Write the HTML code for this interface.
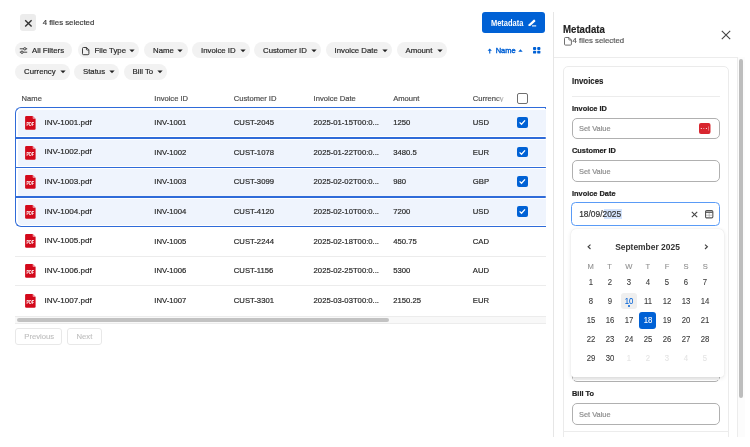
<!DOCTYPE html>
<html><head><meta charset="utf-8"><style>
html,body{margin:0;padding:0;width:750px;height:447px;overflow:hidden;background:#fff;font-family:"Liberation Sans", sans-serif;}
.t{position:absolute;white-space:nowrap;line-height:1;font-family:"Liberation Sans", sans-serif;-webkit-text-stroke:0.2px currentColor;}
.r{position:absolute;}
svg.r{overflow:visible}
</style></head><body>
<div id="w" style="position:absolute;left:0;top:0;width:750px;height:447px;will-change:transform">
<div class="r" style="left:19.5px;top:14.1px;width:16.8px;height:17px;background:#ececec;border-radius:3px"></div>
<svg class="r" style="left:19.5px;top:14.6px" width="17" height="17" viewBox="0 0 17 17"><path d="M5.2 5.2 L11.6 11.6 M11.6 5.2 L5.2 11.6" stroke="#333" stroke-width="1.4" fill="none"/></svg>
<div class="t" style="left:42.7px;top:19.30px;font-size:7.8px;color:#3d3d3d;font-weight:normal;">4 files selected</div>
<div class="r" style="left:482px;top:12.4px;width:63.4px;height:21px;background:#0061d5;border-radius:3px"></div>
<div class="t" style="left:490.8px;top:18.67px;font-size:8.3px;color:#fff;font-weight:bold;-webkit-text-stroke:0;transform:scaleX(0.9);transform-origin:0 0">Metadata</div>
<svg class="r" style="left:527px;top:19px" width="10" height="8" viewBox="0 0 10 8"><path d="M1.4 6.9 L1.6 5.6 L6.6 0.8 Q7.1 0.4 7.6 0.8 L8.2 1.4 Q8.6 1.9 8.2 2.4 L3.2 7.1 Z" fill="#fff"/><path d="M5 6.9 H9.2" stroke="#fff" stroke-width="1.1"/></svg>
<div class="r" style="left:15.4px;top:42.3px;width:57px;height:16.2px;background:#f2f2f2;border-radius:8px"></div>
<div class="t" style="left:32px;top:46.90px;font-size:7.8px;color:#2a2a2a;font-weight:normal;">All Filters</div>
<svg class="r" style="left:19px;top:45.8px" width="9" height="9" viewBox="0 0 9 9"><path d="M0.8 2.8 H8.2 M0.8 6.2 H8.2" stroke="#333" stroke-width="0.9"/><circle cx="5.8" cy="2.8" r="1.2" fill="#f2f2f2" stroke="#333" stroke-width="0.9"/><circle cx="3" cy="6.2" r="1.2" fill="#f2f2f2" stroke="#333" stroke-width="0.9"/></svg>
<div class="r" style="left:77.6px;top:42.3px;width:61.8px;height:16.2px;background:#f2f2f2;border-radius:8px"></div>
<div class="t" style="left:94.5px;top:46.90px;font-size:7.8px;color:#2a2a2a;font-weight:normal;">File Type</div>
<svg class="r" style="left:128.99999999999997px;top:48.8px" width="6" height="4" viewBox="0 0 6 4"><path d="M0.6 0.5 H5.4 Q5.6 0.5 5.4 0.8 L3.2 3.1 Q3 3.3 2.8 3.1 L0.6 0.8 Q0.4 0.5 0.6 0.5 Z" fill="#222"/></svg>
<svg class="r" style="left:82px;top:46.699999999999996px" width="7.4" height="8.2" viewBox="0 0 7.4 8.2"><path d="M1.6 0.5 H4.6 L6.9 2.8 V6.7 Q6.9 7.7 5.9 7.7 H1.6 Q0.5 7.7 0.5 6.7 V1.5 Q0.5 0.5 1.6 0.5 Z M4.4 0.6 V2.2 Q4.4 3 5.2 3 H6.8" stroke="#333" stroke-width="0.95" fill="none" stroke-linejoin="round"/></svg>
<div class="r" style="left:144.4px;top:42.3px;width:43.2px;height:16.2px;background:#f2f2f2;border-radius:8px"></div>
<div class="t" style="left:153px;top:46.90px;font-size:7.8px;color:#2a2a2a;font-weight:normal;">Name</div>
<svg class="r" style="left:177.20000000000002px;top:48.8px" width="6" height="4" viewBox="0 0 6 4"><path d="M0.6 0.5 H5.4 Q5.6 0.5 5.4 0.8 L3.2 3.1 Q3 3.3 2.8 3.1 L0.6 0.8 Q0.4 0.5 0.6 0.5 Z" fill="#222"/></svg>
<div class="r" style="left:192px;top:42.3px;width:58px;height:16.2px;background:#f2f2f2;border-radius:8px"></div>
<div class="t" style="left:201px;top:46.90px;font-size:7.8px;color:#2a2a2a;font-weight:normal;">Invoice ID</div>
<svg class="r" style="left:239.6px;top:48.8px" width="6" height="4" viewBox="0 0 6 4"><path d="M0.6 0.5 H5.4 Q5.6 0.5 5.4 0.8 L3.2 3.1 Q3 3.3 2.8 3.1 L0.6 0.8 Q0.4 0.5 0.6 0.5 Z" fill="#222"/></svg>
<div class="r" style="left:254.4px;top:42.3px;width:66.6px;height:16.2px;background:#f2f2f2;border-radius:8px"></div>
<div class="t" style="left:263px;top:46.90px;font-size:7.8px;color:#2a2a2a;font-weight:normal;">Customer ID</div>
<svg class="r" style="left:310.6px;top:48.8px" width="6" height="4" viewBox="0 0 6 4"><path d="M0.6 0.5 H5.4 Q5.6 0.5 5.4 0.8 L3.2 3.1 Q3 3.3 2.8 3.1 L0.6 0.8 Q0.4 0.5 0.6 0.5 Z" fill="#222"/></svg>
<div class="r" style="left:326px;top:42.3px;width:66.4px;height:16.2px;background:#f2f2f2;border-radius:8px"></div>
<div class="t" style="left:334.5px;top:46.90px;font-size:7.8px;color:#2a2a2a;font-weight:normal;">Invoice Date</div>
<svg class="r" style="left:382.0px;top:48.8px" width="6" height="4" viewBox="0 0 6 4"><path d="M0.6 0.5 H5.4 Q5.6 0.5 5.4 0.8 L3.2 3.1 Q3 3.3 2.8 3.1 L0.6 0.8 Q0.4 0.5 0.6 0.5 Z" fill="#222"/></svg>
<div class="r" style="left:397px;top:42.3px;width:50px;height:16.2px;background:#f2f2f2;border-radius:8px"></div>
<div class="t" style="left:405.5px;top:46.90px;font-size:7.8px;color:#2a2a2a;font-weight:normal;">Amount</div>
<svg class="r" style="left:436.6px;top:48.8px" width="6" height="4" viewBox="0 0 6 4"><path d="M0.6 0.5 H5.4 Q5.6 0.5 5.4 0.8 L3.2 3.1 Q3 3.3 2.8 3.1 L0.6 0.8 Q0.4 0.5 0.6 0.5 Z" fill="#222"/></svg>
<div class="r" style="left:15.4px;top:63.7px;width:54.6px;height:16.2px;background:#f2f2f2;border-radius:8px"></div>
<div class="t" style="left:24px;top:68.30px;font-size:7.8px;color:#2a2a2a;font-weight:normal;">Currency</div>
<svg class="r" style="left:59.6px;top:70.2px" width="6" height="4" viewBox="0 0 6 4"><path d="M0.6 0.5 H5.4 Q5.6 0.5 5.4 0.8 L3.2 3.1 Q3 3.3 2.8 3.1 L0.6 0.8 Q0.4 0.5 0.6 0.5 Z" fill="#222"/></svg>
<div class="r" style="left:74.4px;top:63.7px;width:44.6px;height:16.2px;background:#f2f2f2;border-radius:8px"></div>
<div class="t" style="left:83px;top:68.30px;font-size:7.8px;color:#2a2a2a;font-weight:normal;">Status</div>
<svg class="r" style="left:108.6px;top:70.2px" width="6" height="4" viewBox="0 0 6 4"><path d="M0.6 0.5 H5.4 Q5.6 0.5 5.4 0.8 L3.2 3.1 Q3 3.3 2.8 3.1 L0.6 0.8 Q0.4 0.5 0.6 0.5 Z" fill="#222"/></svg>
<div class="r" style="left:124px;top:63.7px;width:43px;height:16.2px;background:#f2f2f2;border-radius:8px"></div>
<div class="t" style="left:132.5px;top:68.30px;font-size:7.8px;color:#2a2a2a;font-weight:normal;">Bill To</div>
<svg class="r" style="left:156.6px;top:70.2px" width="6" height="4" viewBox="0 0 6 4"><path d="M0.6 0.5 H5.4 Q5.6 0.5 5.4 0.8 L3.2 3.1 Q3 3.3 2.8 3.1 L0.6 0.8 Q0.4 0.5 0.6 0.5 Z" fill="#222"/></svg>
<svg class="r" style="left:486.9px;top:47.6px" width="5.5" height="6" viewBox="0 0 5.5 6"><path d="M2.75 0.4 L4.9 2.7 H0.6 Z" fill="#0061d5"/><path d="M2.75 2 V5.4" stroke="#0061d5" stroke-width="1.1"/></svg>
<div class="t" style="left:495.7px;top:46.75px;font-size:7.5px;color:#0061d5;font-weight:normal;-webkit-text-stroke:0.4px #0061d5">Name</div>
<svg class="r" style="left:518.3px;top:48.8px" width="5" height="3" viewBox="0 0 5 3"><path d="M0.3 2.7 H4.7 L2.5 0.3 Z" fill="#0061d5"/></svg>
<svg class="r" style="left:533.2px;top:47.1px" width="7.4" height="6.6" viewBox="0 0 7.4 6.6"><rect x="0" y="0" width="3.2" height="2.9" rx="0.9" fill="#0061d5"/><rect x="4.2" y="0" width="3.2" height="2.9" rx="0.9" fill="#0061d5"/><rect x="0" y="3.7" width="3.2" height="2.9" rx="0.9" fill="#0061d5"/><rect x="4.2" y="3.7" width="3.2" height="2.9" rx="0.9" fill="#0061d5"/></svg>
<div class="t" style="left:21.6px;top:94.87px;font-size:7.6px;color:#4e4e4e;font-weight:normal;">Name</div>
<div class="t" style="left:154.3px;top:94.87px;font-size:7.6px;color:#4e4e4e;font-weight:normal;">Invoice ID</div>
<div class="t" style="left:233.8px;top:94.87px;font-size:7.6px;color:#4e4e4e;font-weight:normal;">Customer ID</div>
<div class="t" style="left:313.6px;top:94.87px;font-size:7.6px;color:#4e4e4e;font-weight:normal;">Invoice Date</div>
<div class="t" style="left:393.2px;top:94.87px;font-size:7.6px;color:#4e4e4e;font-weight:normal;">Amount</div>
<div class="t" style="left:472.8px;top:94.87px;font-size:7.6px;color:#4e4e4e;font-weight:normal;width:32px;overflow:hidden;-webkit-mask-image:linear-gradient(to right,#000 72%,rgba(0,0,0,0.15) 100%)">Currency</div>
<div class="r" style="left:517px;top:93px;width:10.5px;height:10.5px;border:1.2px solid #6f6f6f;border-radius:2px;box-sizing:border-box;background:#fff"></div>
<div class="r" style="left:15.0px;top:107.4px;width:531.0px;height:120.08000000000001px;background:#fff;border:1.6px solid #2f6bd9;border-right:none;border-radius:6px 0 0 6px;box-sizing:border-box"></div>
<div class="r" style="left:17.6px;top:109.9px;width:528.4px;height:26.519999999999982px;background:#eff4fd;border-radius:4px 0 0 0"></div>
<div class="r" style="left:17.6px;top:139.52px;width:528.4px;height:26.519999999999982px;background:#eff4fd;border-radius:0"></div>
<div class="r" style="left:17.6px;top:169.14000000000001px;width:528.4px;height:26.519999999999982px;background:#eff4fd;border-radius:0"></div>
<div class="r" style="left:17.6px;top:198.76000000000002px;width:528.4px;height:26.519999999999982px;background:#eff4fd;border-radius:0 0 0 4px"></div>
<div class="r" style="left:15.0px;top:137.01999999999998px;width:531.0px;height:1.6px;background:#2f6bd9;border-radius:0 1px 1px 0"></div>
<div class="r" style="left:15.0px;top:166.64px;width:531.0px;height:1.6px;background:#2f6bd9;border-radius:0 1px 1px 0"></div>
<div class="r" style="left:15.0px;top:196.26px;width:531.0px;height:1.6px;background:#2f6bd9;border-radius:0 1px 1px 0"></div>
<div class="r" style="left:545px;top:107.4px;width:1.2px;height:1.6px;background:#2f6bd9;border-radius:0 1px 1px 0"></div>
<div class="r" style="left:15.0px;top:255.8px;width:531.0px;height:1px;background:#ececec"></div>
<div class="r" style="left:15.0px;top:285.42px;width:531.0px;height:1px;background:#ececec"></div>
<svg class="r" style="left:24.7px;top:115.9px" width="11" height="14" viewBox="0 0 11 14"><path d="M1.3 0.1 H7.6 L10.6 3.1 V12.5 Q10.6 13.7 9.4 13.7 H1.3 Q0.1 13.7 0.1 12.5 V1.3 Q0.1 0.1 1.3 0.1 Z" fill="#d3091b"/><path d="M7.6 0.1 V2.1 Q7.6 3.1 8.6 3.1 H10.6 Z" fill="#ee8f98"/><text x="1.4" y="10.1" font-family="Liberation Sans" font-weight="bold" font-size="5.6" textLength="7.6" lengthAdjust="spacingAndGlyphs" fill="#fff">PDF</text></svg>
<div class="t" style="left:44.4px;top:118.84px;font-size:8.1px;color:#2a2a2a;font-weight:normal;">INV-1001.pdf</div>
<div class="t" style="left:154.3px;top:119.18px;font-size:7.7px;color:#2a2a2a;font-weight:normal;">INV-1001</div>
<div class="t" style="left:233.8px;top:119.18px;font-size:7.7px;color:#2a2a2a;font-weight:normal;">CUST-2045</div>
<div class="t" style="left:313.6px;top:119.18px;font-size:7.7px;color:#2a2a2a;font-weight:normal;">2025-01-15T00:0...</div>
<div class="t" style="left:393.2px;top:119.18px;font-size:7.7px;color:#2a2a2a;font-weight:normal;">1250</div>
<div class="t" style="left:472.8px;top:119.18px;font-size:7.7px;color:#2a2a2a;font-weight:normal;">USD</div>
<div class="r" style="left:517px;top:117.2px;width:10.5px;height:10.5px;background:#0061d5;border-radius:2px"></div>
<svg class="r" style="left:517px;top:117.2px" width="10.5" height="10.5" viewBox="0 0 10.5 10.5"><path d="M2.6 5.4 L4.5 7.3 L8 3.4" stroke="#fff" stroke-width="1.3" fill="none"/></svg>
<svg class="r" style="left:24.7px;top:145.51999999999998px" width="11" height="14" viewBox="0 0 11 14"><path d="M1.3 0.1 H7.6 L10.6 3.1 V12.5 Q10.6 13.7 9.4 13.7 H1.3 Q0.1 13.7 0.1 12.5 V1.3 Q0.1 0.1 1.3 0.1 Z" fill="#d3091b"/><path d="M7.6 0.1 V2.1 Q7.6 3.1 8.6 3.1 H10.6 Z" fill="#ee8f98"/><text x="1.4" y="10.1" font-family="Liberation Sans" font-weight="bold" font-size="5.6" textLength="7.6" lengthAdjust="spacingAndGlyphs" fill="#fff">PDF</text></svg>
<div class="t" style="left:44.4px;top:148.46px;font-size:8.1px;color:#2a2a2a;font-weight:normal;">INV-1002.pdf</div>
<div class="t" style="left:154.3px;top:148.80px;font-size:7.7px;color:#2a2a2a;font-weight:normal;">INV-1002</div>
<div class="t" style="left:233.8px;top:148.80px;font-size:7.7px;color:#2a2a2a;font-weight:normal;">CUST-1078</div>
<div class="t" style="left:313.6px;top:148.80px;font-size:7.7px;color:#2a2a2a;font-weight:normal;">2025-01-22T00:0...</div>
<div class="t" style="left:393.2px;top:148.80px;font-size:7.7px;color:#2a2a2a;font-weight:normal;">3480.5</div>
<div class="t" style="left:472.8px;top:148.80px;font-size:7.7px;color:#2a2a2a;font-weight:normal;">EUR</div>
<div class="r" style="left:517px;top:146.82px;width:10.5px;height:10.5px;background:#0061d5;border-radius:2px"></div>
<svg class="r" style="left:517px;top:146.82px" width="10.5" height="10.5" viewBox="0 0 10.5 10.5"><path d="M2.6 5.4 L4.5 7.3 L8 3.4" stroke="#fff" stroke-width="1.3" fill="none"/></svg>
<svg class="r" style="left:24.7px;top:175.14px" width="11" height="14" viewBox="0 0 11 14"><path d="M1.3 0.1 H7.6 L10.6 3.1 V12.5 Q10.6 13.7 9.4 13.7 H1.3 Q0.1 13.7 0.1 12.5 V1.3 Q0.1 0.1 1.3 0.1 Z" fill="#d3091b"/><path d="M7.6 0.1 V2.1 Q7.6 3.1 8.6 3.1 H10.6 Z" fill="#ee8f98"/><text x="1.4" y="10.1" font-family="Liberation Sans" font-weight="bold" font-size="5.6" textLength="7.6" lengthAdjust="spacingAndGlyphs" fill="#fff">PDF</text></svg>
<div class="t" style="left:44.4px;top:178.08px;font-size:8.1px;color:#2a2a2a;font-weight:normal;">INV-1003.pdf</div>
<div class="t" style="left:154.3px;top:178.42px;font-size:7.7px;color:#2a2a2a;font-weight:normal;">INV-1003</div>
<div class="t" style="left:233.8px;top:178.42px;font-size:7.7px;color:#2a2a2a;font-weight:normal;">CUST-3099</div>
<div class="t" style="left:313.6px;top:178.42px;font-size:7.7px;color:#2a2a2a;font-weight:normal;">2025-02-02T00:0...</div>
<div class="t" style="left:393.2px;top:178.42px;font-size:7.7px;color:#2a2a2a;font-weight:normal;">980</div>
<div class="t" style="left:472.8px;top:178.42px;font-size:7.7px;color:#2a2a2a;font-weight:normal;">GBP</div>
<div class="r" style="left:517px;top:176.44px;width:10.5px;height:10.5px;background:#0061d5;border-radius:2px"></div>
<svg class="r" style="left:517px;top:176.44px" width="10.5" height="10.5" viewBox="0 0 10.5 10.5"><path d="M2.6 5.4 L4.5 7.3 L8 3.4" stroke="#fff" stroke-width="1.3" fill="none"/></svg>
<svg class="r" style="left:24.7px;top:204.76px" width="11" height="14" viewBox="0 0 11 14"><path d="M1.3 0.1 H7.6 L10.6 3.1 V12.5 Q10.6 13.7 9.4 13.7 H1.3 Q0.1 13.7 0.1 12.5 V1.3 Q0.1 0.1 1.3 0.1 Z" fill="#d3091b"/><path d="M7.6 0.1 V2.1 Q7.6 3.1 8.6 3.1 H10.6 Z" fill="#ee8f98"/><text x="1.4" y="10.1" font-family="Liberation Sans" font-weight="bold" font-size="5.6" textLength="7.6" lengthAdjust="spacingAndGlyphs" fill="#fff">PDF</text></svg>
<div class="t" style="left:44.4px;top:207.70px;font-size:8.1px;color:#2a2a2a;font-weight:normal;">INV-1004.pdf</div>
<div class="t" style="left:154.3px;top:208.04px;font-size:7.7px;color:#2a2a2a;font-weight:normal;">INV-1004</div>
<div class="t" style="left:233.8px;top:208.04px;font-size:7.7px;color:#2a2a2a;font-weight:normal;">CUST-4120</div>
<div class="t" style="left:313.6px;top:208.04px;font-size:7.7px;color:#2a2a2a;font-weight:normal;">2025-02-10T00:0...</div>
<div class="t" style="left:393.2px;top:208.04px;font-size:7.7px;color:#2a2a2a;font-weight:normal;">7200</div>
<div class="t" style="left:472.8px;top:208.04px;font-size:7.7px;color:#2a2a2a;font-weight:normal;">USD</div>
<div class="r" style="left:517px;top:206.06px;width:10.5px;height:10.5px;background:#0061d5;border-radius:2px"></div>
<svg class="r" style="left:517px;top:206.06px" width="10.5" height="10.5" viewBox="0 0 10.5 10.5"><path d="M2.6 5.4 L4.5 7.3 L8 3.4" stroke="#fff" stroke-width="1.3" fill="none"/></svg>
<svg class="r" style="left:24.7px;top:234.38px" width="11" height="14" viewBox="0 0 11 14"><path d="M1.3 0.1 H7.6 L10.6 3.1 V12.5 Q10.6 13.7 9.4 13.7 H1.3 Q0.1 13.7 0.1 12.5 V1.3 Q0.1 0.1 1.3 0.1 Z" fill="#d3091b"/><path d="M7.6 0.1 V2.1 Q7.6 3.1 8.6 3.1 H10.6 Z" fill="#ee8f98"/><text x="1.4" y="10.1" font-family="Liberation Sans" font-weight="bold" font-size="5.6" textLength="7.6" lengthAdjust="spacingAndGlyphs" fill="#fff">PDF</text></svg>
<div class="t" style="left:44.4px;top:237.32px;font-size:8.1px;color:#2a2a2a;font-weight:normal;">INV-1005.pdf</div>
<div class="t" style="left:154.3px;top:237.66px;font-size:7.7px;color:#2a2a2a;font-weight:normal;">INV-1005</div>
<div class="t" style="left:233.8px;top:237.66px;font-size:7.7px;color:#2a2a2a;font-weight:normal;">CUST-2244</div>
<div class="t" style="left:313.6px;top:237.66px;font-size:7.7px;color:#2a2a2a;font-weight:normal;">2025-02-18T00:0...</div>
<div class="t" style="left:393.2px;top:237.66px;font-size:7.7px;color:#2a2a2a;font-weight:normal;">450.75</div>
<div class="t" style="left:472.8px;top:237.66px;font-size:7.7px;color:#2a2a2a;font-weight:normal;">CAD</div>
<svg class="r" style="left:24.7px;top:264.0px" width="11" height="14" viewBox="0 0 11 14"><path d="M1.3 0.1 H7.6 L10.6 3.1 V12.5 Q10.6 13.7 9.4 13.7 H1.3 Q0.1 13.7 0.1 12.5 V1.3 Q0.1 0.1 1.3 0.1 Z" fill="#d3091b"/><path d="M7.6 0.1 V2.1 Q7.6 3.1 8.6 3.1 H10.6 Z" fill="#ee8f98"/><text x="1.4" y="10.1" font-family="Liberation Sans" font-weight="bold" font-size="5.6" textLength="7.6" lengthAdjust="spacingAndGlyphs" fill="#fff">PDF</text></svg>
<div class="t" style="left:44.4px;top:266.94px;font-size:8.1px;color:#2a2a2a;font-weight:normal;">INV-1006.pdf</div>
<div class="t" style="left:154.3px;top:267.28px;font-size:7.7px;color:#2a2a2a;font-weight:normal;">INV-1006</div>
<div class="t" style="left:233.8px;top:267.28px;font-size:7.7px;color:#2a2a2a;font-weight:normal;">CUST-1156</div>
<div class="t" style="left:313.6px;top:267.28px;font-size:7.7px;color:#2a2a2a;font-weight:normal;">2025-02-25T00:0...</div>
<div class="t" style="left:393.2px;top:267.28px;font-size:7.7px;color:#2a2a2a;font-weight:normal;">5300</div>
<div class="t" style="left:472.8px;top:267.28px;font-size:7.7px;color:#2a2a2a;font-weight:normal;">AUD</div>
<svg class="r" style="left:24.7px;top:293.62px" width="11" height="14" viewBox="0 0 11 14"><path d="M1.3 0.1 H7.6 L10.6 3.1 V12.5 Q10.6 13.7 9.4 13.7 H1.3 Q0.1 13.7 0.1 12.5 V1.3 Q0.1 0.1 1.3 0.1 Z" fill="#d3091b"/><path d="M7.6 0.1 V2.1 Q7.6 3.1 8.6 3.1 H10.6 Z" fill="#ee8f98"/><text x="1.4" y="10.1" font-family="Liberation Sans" font-weight="bold" font-size="5.6" textLength="7.6" lengthAdjust="spacingAndGlyphs" fill="#fff">PDF</text></svg>
<div class="t" style="left:44.4px;top:296.56px;font-size:8.1px;color:#2a2a2a;font-weight:normal;">INV-1007.pdf</div>
<div class="t" style="left:154.3px;top:296.90px;font-size:7.7px;color:#2a2a2a;font-weight:normal;">INV-1007</div>
<div class="t" style="left:233.8px;top:296.90px;font-size:7.7px;color:#2a2a2a;font-weight:normal;">CUST-3301</div>
<div class="t" style="left:313.6px;top:296.90px;font-size:7.7px;color:#2a2a2a;font-weight:normal;">2025-03-03T00:0...</div>
<div class="t" style="left:393.2px;top:296.90px;font-size:7.7px;color:#2a2a2a;font-weight:normal;">2150.25</div>
<div class="t" style="left:472.8px;top:296.90px;font-size:7.7px;color:#2a2a2a;font-weight:normal;">EUR</div>
<div class="r" style="left:15.0px;top:315.5px;width:531px;height:8.2px;background:#f8f8f8;border-top:1px solid #ececec;border-bottom:1px solid #ececec;box-sizing:border-box"></div>
<div class="r" style="left:17px;top:317.9px;width:371.5px;height:4.0px;background:#c2c2c2;border-radius:2px"></div>
<div class="r" style="left:15.3px;top:328.3px;width:47.2px;height:17.2px;border:1px solid #e8e8e8;border-radius:3px;box-sizing:border-box"></div>
<div class="t" style="left:24.3px;top:333.48px;font-size:7.7px;color:#bdbdbd;font-weight:normal;-webkit-text-stroke:0.1px #bdbdbd">Previous</div>
<div class="r" style="left:67.0px;top:328.3px;width:35.2px;height:17.2px;border:1px solid #e8e8e8;border-radius:3px;box-sizing:border-box"></div>
<div class="t" style="left:76.5px;top:333.48px;font-size:7.7px;color:#bdbdbd;font-weight:normal;-webkit-text-stroke:0.1px #bdbdbd">Next</div>
<div class="r" style="left:553px;top:12px;width:1px;height:425px;background:#e6e6e6"></div>
<div class="t" style="left:563.2px;top:25.14px;font-size:10.0px;color:#222;font-weight:bold;transform:scaleX(0.965);transform-origin:0 0;-webkit-text-stroke:0.15px #222">Metadata</div>
<svg class="r" style="left:563.6px;top:36.8px" width="8" height="8.6" viewBox="0 0 8 8.6"><path d="M1.5 0.5 H4.9 L7.4 3 V7.3 Q7.4 8.1 6.6 8.1 H1.5 Q0.5 8.1 0.5 7.3 V1.4 Q0.5 0.5 1.5 0.5 Z M4.8 0.6 V2.3 Q4.8 3 5.5 3 H7.3" stroke="#555" stroke-width="0.85" fill="none" stroke-linejoin="round"/></svg>
<div class="t" style="left:572.5px;top:36.90px;font-size:7.8px;color:#5a5a5a;font-weight:normal;">4 files selected</div>
<svg class="r" style="left:721px;top:30px" width="10" height="10" viewBox="0 0 10 10"><path d="M0.8 0.8 L9.2 9.2 M9.2 0.8 L0.8 9.2" stroke="#444" stroke-width="1.1"/></svg>
<div class="r" style="left:554px;top:56.6px;width:191px;height:1px;background:#ececec"></div>
<div class="r" style="left:737px;top:57px;width:8px;height:380px;background:#fcfcfc;border-left:1px solid #ececec;box-sizing:border-box"></div>
<div class="r" style="left:739.1px;top:59.0px;width:4.0px;height:338.5px;background:#bdbdbd;border-radius:2px"></div>
<div class="r" style="left:563px;top:66px;width:165.5px;height:380px;border:1px solid #ebebeb;border-radius:5px;box-sizing:border-box;background:#fff"></div>
<div class="t" style="left:572px;top:76.81px;font-size:9.2px;color:#222;font-weight:bold;transform:scaleX(0.855);transform-origin:0 0;-webkit-text-stroke:0.15px #222">Invoices</div>
<div class="r" style="left:572px;top:96px;width:148px;height:1px;background:#ececec"></div>
<div class="t" style="left:572px;top:104.74px;font-size:7.4px;color:#222;font-weight:bold;">Invoice ID</div>
<div class="r" style="left:572px;top:117.6px;width:148px;height:21.8px;border:1.4px solid #b0b0b0;border-radius:5px;box-sizing:border-box;background:#fff"></div>
<div class="t" style="left:579px;top:125.24px;font-size:7.4px;color:#8e8e8e;font-weight:normal;">Set Value</div>
<svg class="r" style="left:699px;top:123px" width="11.5" height="11" viewBox="0 0 11.5 11"><rect x="0" y="0" width="11.5" height="11" rx="2" fill="#d8262f"/><circle cx="2.3" cy="5.5" r="0.6" fill="#fff"/><circle cx="4.8" cy="5.5" r="0.6" fill="#fff" opacity="0.7"/><circle cx="7.4" cy="5.5" r="0.6" fill="#fff"/><path d="M9.6 3.4 V7.6" stroke="#fff" stroke-width="0.5" opacity="0.85"/></svg>
<div class="t" style="left:572px;top:146.94px;font-size:7.4px;color:#222;font-weight:bold;">Customer ID</div>
<div class="r" style="left:572px;top:160.1px;width:148px;height:21.8px;border:1.4px solid #b0b0b0;border-radius:5px;box-sizing:border-box;background:#fff"></div>
<div class="t" style="left:579px;top:167.74px;font-size:7.4px;color:#8e8e8e;font-weight:normal;">Set Value</div>
<div class="t" style="left:572px;top:189.74px;font-size:7.4px;color:#222;font-weight:bold;">Invoice Date</div>
<div class="r" style="left:571.2px;top:202.2px;width:148.8px;height:23.9px;border:1.8px solid #5a9bf6;border-radius:4.5px;box-sizing:border-box;background:#fff"></div>
<div class="r" style="left:604px;top:209.2px;width:17.8px;height:9.6px;background:#d3e3fc"></div>
<div class="t" style="left:579.2px;top:209.69px;font-size:8.4px;color:#333;font-weight:normal;">18/09/2025</div>
<svg class="r" style="left:690.5px;top:210.5px" width="7" height="7" viewBox="0 0 7 7"><path d="M0.8 0.8 L6.2 6.2 M6.2 0.8 L0.8 6.2" stroke="#444" stroke-width="1.1"/></svg>
<svg class="r" style="left:704.8px;top:209.8px" width="8.4" height="8.4" viewBox="0 0 8.4 8.4"><rect x="0.55" y="0.55" width="7.3" height="7.3" rx="1.2" stroke="#555" stroke-width="1.1" fill="none"/><path d="M0.6 2.2 H7.8" stroke="#555" stroke-width="1.4"/><path d="M4.2 3 V7.6 M1 5.2 H7.4" stroke="#999" stroke-width="0.6"/></svg>
<div class="r" style="left:572px;top:360px;width:148px;height:21.6px;border:1.4px solid #b0b0b0;border-radius:5px;box-sizing:border-box;background:#fff"></div>
<div class="r" style="left:573px;top:376.5px;width:146px;height:3.0px;background:#f1f1f1"></div>
<div class="r" style="left:571.3px;top:229px;width:152.7px;height:147.8px;background:#fff;border-radius:5px 5px 3px 3px;box-shadow:0 1px 4px rgba(0,0,0,0.10), 0 0 1px rgba(0,0,0,0.12)"></div>
<svg class="r" style="left:586.6px;top:243.6px" width="4.5" height="5.6" viewBox="0 0 4.5 5.6"><path d="M3.5 0.6 L1.1 2.8 L3.5 5" stroke="#444" stroke-width="1.15" fill="none"/></svg>
<svg class="r" style="left:704.2px;top:243.6px" width="4.5" height="5.6" viewBox="0 0 4.5 5.6"><path d="M1 0.6 L3.4 2.8 L1 5" stroke="#444" stroke-width="1.15" fill="none"/></svg>
<div class="t" style="left:571px;width:153px;text-align:center;top:242.14px;font-size:9.4px;color:#333;font-weight:bold;-webkit-text-stroke:0;transform:scaleX(0.9)">September 2025</div>
<div class="t" style="left:582.60px;width:16px;text-align:center;top:262.57px;font-size:7.6px;color:#8f8f8f;-webkit-text-stroke:0.1px #8f8f8f">M</div>
<div class="t" style="left:601.70px;width:16px;text-align:center;top:262.57px;font-size:7.6px;color:#8f8f8f;-webkit-text-stroke:0.1px #8f8f8f">T</div>
<div class="t" style="left:620.80px;width:16px;text-align:center;top:262.57px;font-size:7.6px;color:#8f8f8f;-webkit-text-stroke:0.1px #8f8f8f">W</div>
<div class="t" style="left:639.90px;width:16px;text-align:center;top:262.57px;font-size:7.6px;color:#8f8f8f;-webkit-text-stroke:0.1px #8f8f8f">T</div>
<div class="t" style="left:659.00px;width:16px;text-align:center;top:262.57px;font-size:7.6px;color:#8f8f8f;-webkit-text-stroke:0.1px #8f8f8f">F</div>
<div class="t" style="left:678.10px;width:16px;text-align:center;top:262.57px;font-size:7.6px;color:#8f8f8f;-webkit-text-stroke:0.1px #8f8f8f">S</div>
<div class="t" style="left:697.20px;width:16px;text-align:center;top:262.57px;font-size:7.6px;color:#8f8f8f;-webkit-text-stroke:0.1px #8f8f8f">S</div>
<div class="t" style="left:580.60px;width:20px;text-align:center;top:277.82px;font-size:8.6px;color:#3a3a3a;-webkit-text-stroke:0.1px #3a3a3a;transform:scaleX(0.9)">1</div>
<div class="t" style="left:599.70px;width:20px;text-align:center;top:277.82px;font-size:8.6px;color:#3a3a3a;-webkit-text-stroke:0.1px #3a3a3a;transform:scaleX(0.9)">2</div>
<div class="t" style="left:618.80px;width:20px;text-align:center;top:277.82px;font-size:8.6px;color:#3a3a3a;-webkit-text-stroke:0.1px #3a3a3a;transform:scaleX(0.9)">3</div>
<div class="t" style="left:637.90px;width:20px;text-align:center;top:277.82px;font-size:8.6px;color:#3a3a3a;-webkit-text-stroke:0.1px #3a3a3a;transform:scaleX(0.9)">4</div>
<div class="t" style="left:657.00px;width:20px;text-align:center;top:277.82px;font-size:8.6px;color:#3a3a3a;-webkit-text-stroke:0.1px #3a3a3a;transform:scaleX(0.9)">5</div>
<div class="t" style="left:676.10px;width:20px;text-align:center;top:277.82px;font-size:8.6px;color:#3a3a3a;-webkit-text-stroke:0.1px #3a3a3a;transform:scaleX(0.9)">6</div>
<div class="t" style="left:695.20px;width:20px;text-align:center;top:277.82px;font-size:8.6px;color:#3a3a3a;-webkit-text-stroke:0.1px #3a3a3a;transform:scaleX(0.9)">7</div>
<div class="t" style="left:580.60px;width:20px;text-align:center;top:296.82px;font-size:8.6px;color:#3a3a3a;-webkit-text-stroke:0.1px #3a3a3a;transform:scaleX(0.9)">8</div>
<div class="t" style="left:599.70px;width:20px;text-align:center;top:296.82px;font-size:8.6px;color:#3a3a3a;-webkit-text-stroke:0.1px #3a3a3a;transform:scaleX(0.9)">9</div>
<div class="r" style="left:620.5px;top:292.9px;width:16.6px;height:16.2px;background:#efefef;border-radius:3px"></div>
<div class="r" style="left:627.8px;top:305.4px;width:2.1px;height:2.1px;background:#0061d5;border-radius:50%"></div>
<div class="t" style="left:618.80px;width:20px;text-align:center;top:296.82px;font-size:8.6px;color:#0061d5;-webkit-text-stroke:0.1px #0061d5;transform:scaleX(0.9)">10</div>
<div class="t" style="left:637.90px;width:20px;text-align:center;top:296.82px;font-size:8.6px;color:#3a3a3a;-webkit-text-stroke:0.1px #3a3a3a;transform:scaleX(0.9)">11</div>
<div class="t" style="left:657.00px;width:20px;text-align:center;top:296.82px;font-size:8.6px;color:#3a3a3a;-webkit-text-stroke:0.1px #3a3a3a;transform:scaleX(0.9)">12</div>
<div class="t" style="left:676.10px;width:20px;text-align:center;top:296.82px;font-size:8.6px;color:#3a3a3a;-webkit-text-stroke:0.1px #3a3a3a;transform:scaleX(0.9)">13</div>
<div class="t" style="left:695.20px;width:20px;text-align:center;top:296.82px;font-size:8.6px;color:#3a3a3a;-webkit-text-stroke:0.1px #3a3a3a;transform:scaleX(0.9)">14</div>
<div class="t" style="left:580.60px;width:20px;text-align:center;top:315.82px;font-size:8.6px;color:#3a3a3a;-webkit-text-stroke:0.1px #3a3a3a;transform:scaleX(0.9)">15</div>
<div class="t" style="left:599.70px;width:20px;text-align:center;top:315.82px;font-size:8.6px;color:#3a3a3a;-webkit-text-stroke:0.1px #3a3a3a;transform:scaleX(0.9)">16</div>
<div class="t" style="left:618.80px;width:20px;text-align:center;top:315.82px;font-size:8.6px;color:#3a3a3a;-webkit-text-stroke:0.1px #3a3a3a;transform:scaleX(0.9)">17</div>
<div class="r" style="left:639.2px;top:311.7px;width:17.1px;height:17.0px;background:#0061d5;border-radius:3px"></div>
<div class="t" style="left:637.90px;width:20px;text-align:center;top:315.82px;font-size:8.6px;color:#fff;-webkit-text-stroke:0.1px #fff;transform:scaleX(0.9)">18</div>
<div class="t" style="left:657.00px;width:20px;text-align:center;top:315.82px;font-size:8.6px;color:#3a3a3a;-webkit-text-stroke:0.1px #3a3a3a;transform:scaleX(0.9)">19</div>
<div class="t" style="left:676.10px;width:20px;text-align:center;top:315.82px;font-size:8.6px;color:#3a3a3a;-webkit-text-stroke:0.1px #3a3a3a;transform:scaleX(0.9)">20</div>
<div class="t" style="left:695.20px;width:20px;text-align:center;top:315.82px;font-size:8.6px;color:#3a3a3a;-webkit-text-stroke:0.1px #3a3a3a;transform:scaleX(0.9)">21</div>
<div class="t" style="left:580.60px;width:20px;text-align:center;top:334.82px;font-size:8.6px;color:#3a3a3a;-webkit-text-stroke:0.1px #3a3a3a;transform:scaleX(0.9)">22</div>
<div class="t" style="left:599.70px;width:20px;text-align:center;top:334.82px;font-size:8.6px;color:#3a3a3a;-webkit-text-stroke:0.1px #3a3a3a;transform:scaleX(0.9)">23</div>
<div class="t" style="left:618.80px;width:20px;text-align:center;top:334.82px;font-size:8.6px;color:#3a3a3a;-webkit-text-stroke:0.1px #3a3a3a;transform:scaleX(0.9)">24</div>
<div class="t" style="left:637.90px;width:20px;text-align:center;top:334.82px;font-size:8.6px;color:#3a3a3a;-webkit-text-stroke:0.1px #3a3a3a;transform:scaleX(0.9)">25</div>
<div class="t" style="left:657.00px;width:20px;text-align:center;top:334.82px;font-size:8.6px;color:#3a3a3a;-webkit-text-stroke:0.1px #3a3a3a;transform:scaleX(0.9)">26</div>
<div class="t" style="left:676.10px;width:20px;text-align:center;top:334.82px;font-size:8.6px;color:#3a3a3a;-webkit-text-stroke:0.1px #3a3a3a;transform:scaleX(0.9)">27</div>
<div class="t" style="left:695.20px;width:20px;text-align:center;top:334.82px;font-size:8.6px;color:#3a3a3a;-webkit-text-stroke:0.1px #3a3a3a;transform:scaleX(0.9)">28</div>
<div class="t" style="left:580.60px;width:20px;text-align:center;top:353.82px;font-size:8.6px;color:#3a3a3a;-webkit-text-stroke:0.1px #3a3a3a;transform:scaleX(0.9)">29</div>
<div class="t" style="left:599.70px;width:20px;text-align:center;top:353.82px;font-size:8.6px;color:#3a3a3a;-webkit-text-stroke:0.1px #3a3a3a;transform:scaleX(0.9)">30</div>
<div class="t" style="left:618.80px;width:20px;text-align:center;top:353.82px;font-size:8.6px;color:#e4e4e4;-webkit-text-stroke:0.1px #e4e4e4;transform:scaleX(0.9)">1</div>
<div class="t" style="left:637.90px;width:20px;text-align:center;top:353.82px;font-size:8.6px;color:#e4e4e4;-webkit-text-stroke:0.1px #e4e4e4;transform:scaleX(0.9)">2</div>
<div class="t" style="left:657.00px;width:20px;text-align:center;top:353.82px;font-size:8.6px;color:#e4e4e4;-webkit-text-stroke:0.1px #e4e4e4;transform:scaleX(0.9)">3</div>
<div class="t" style="left:676.10px;width:20px;text-align:center;top:353.82px;font-size:8.6px;color:#e4e4e4;-webkit-text-stroke:0.1px #e4e4e4;transform:scaleX(0.9)">4</div>
<div class="t" style="left:695.20px;width:20px;text-align:center;top:353.82px;font-size:8.6px;color:#e4e4e4;-webkit-text-stroke:0.1px #e4e4e4;transform:scaleX(0.9)">5</div>
<div class="t" style="left:572px;top:390.24px;font-size:7.4px;color:#222;font-weight:bold;">Bill To</div>
<div class="r" style="left:572px;top:403.3px;width:148px;height:21.6px;border:1.4px solid #b0b0b0;border-radius:5px;box-sizing:border-box;background:#fff"></div>
<div class="t" style="left:579px;top:410.94px;font-size:7.4px;color:#8e8e8e;font-weight:normal;">Set Value</div>
<div class="r" style="left:563px;top:431.0px;width:165.5px;height:1px;background:#ececec"></div>
<div class="r" style="left:554px;top:437px;width:196px;height:10px;background:#fff"></div>
</div>
</body></html>
